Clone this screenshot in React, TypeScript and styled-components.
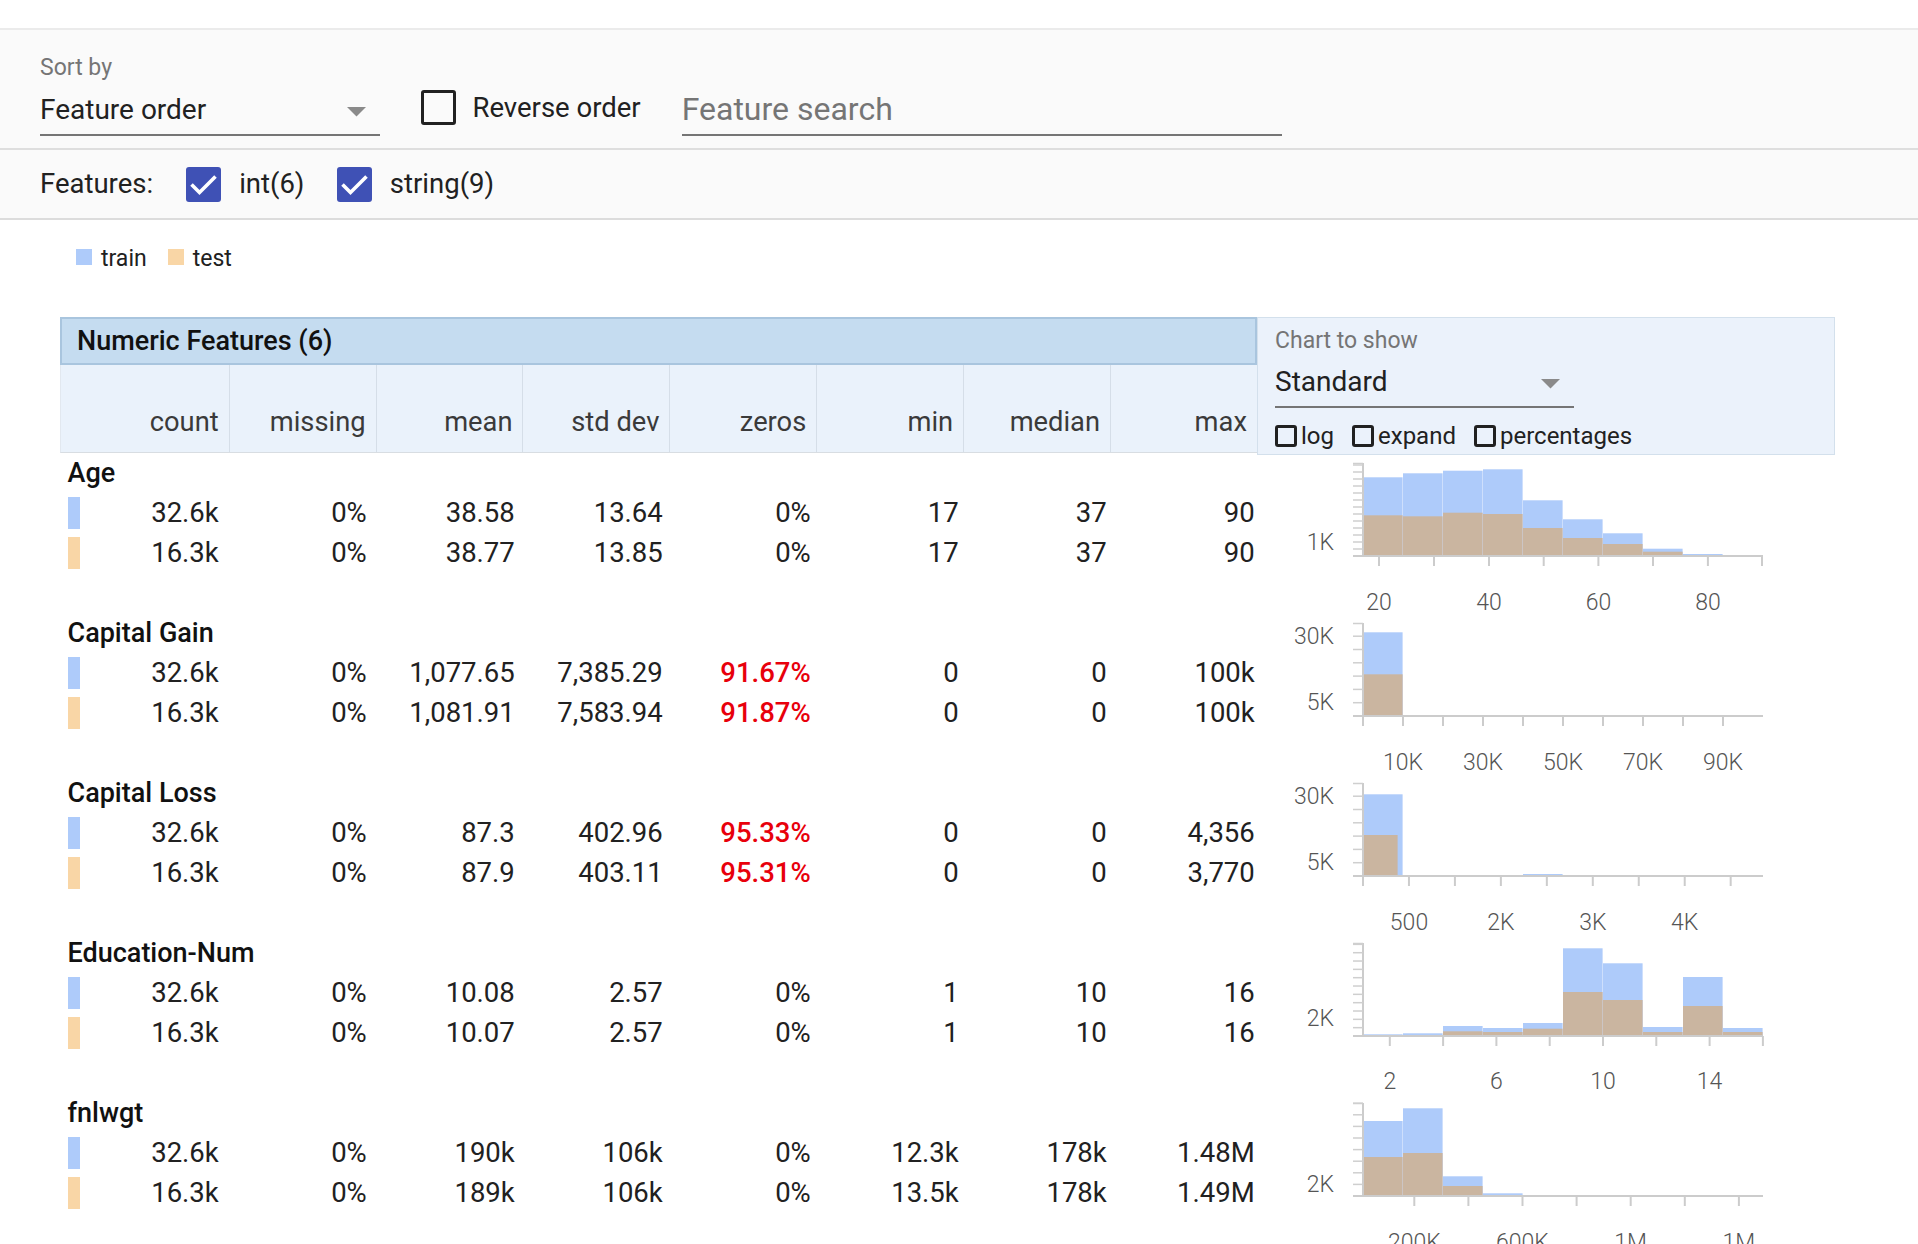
import React from "react";
import styled, { createGlobalStyle } from "styled-components";

const GlobalStyle = createGlobalStyle`
  html, body { margin: 0; padding: 0; background: #ffffff; }
  body {
    font-family: Roboto, "Liberation Sans", Arial, sans-serif;
    color: #212121;
  }
  * { box-sizing: border-box; }
`;

const BLUE = "#aecbfa";
const ORANGE = "#f9d6a6";
const TAN = "#cab5a0";

const Page = styled.div`
  width: 1918px;
`;

const TopStrip = styled.div`
  height: 30px;
  border-bottom: 2px solid #ebebeb;
  background: #ffffff;
`;

const Toolbar = styled.div`
  height: 120px;
  background: #fafafa;
  border-bottom: 2px solid #dedede;
  display: flex;
  align-items: flex-end;
  padding: 0 0 12px 40px;
`;

const SortField = styled.div`
  width: 340px;
  display: flex;
  flex-direction: column;
`;

const FloatLabel = styled.div`
  font-size: 23px;
  line-height: 28px;
  color: #757575;
  margin-bottom: 9.7px;
`;

const SelectBox = styled.div<{ $width?: number }>`
  display: flex;
  align-items: center;
  justify-content: space-between;
  width: ${(p) => (p.$width ? `${p.$width}px` : "100%")};
  border-bottom: 2px solid #757575;
  padding: 0 14px 7px 0;
`;

const SelectText = styled.span<{ $size: number; $shift?: number }>`
  font-size: ${(p) => p.$size}px;
  line-height: 34px;
  color: #212121;
  margin-top: ${(p) => p.$shift || 0}px;
`;

const Arrow = styled.svg`
  display: block;
  margin-top: 4px;
`;

const ReverseLabel = styled.label`
  display: flex;
  align-items: center;
  margin: 0 0 11px 40.5px;
`;

const OutlineBox = styled.span<{ $size: number; $border: number }>`
  display: inline-block;
  flex: none;
  width: ${(p) => p.$size}px;
  height: ${(p) => p.$size}px;
  border: ${(p) => p.$border}px solid #212121;
  border-radius: 3px;
`;

const ToolbarText = styled.span`
  font-size: 27.5px;
  line-height: 34px;
  margin-left: 17px;
  margin-top: 2px;
  color: #212121;
`;

const SearchInput = styled.input`
  margin-left: 41px;
  width: 600px;
  height: 38px;
  border: none;
  border-bottom: 2px solid #757575;
  background: transparent;
  padding: 0 0 6px 0;
  box-sizing: content-box;
  font-family: Roboto, "Liberation Sans", Arial, sans-serif;
  font-size: 32px;
  color: #212121;
  outline: none;
  &::placeholder {
    color: #757575;
  }
`;

const FeaturesBar = styled.div`
  height: 70px;
  background: #fafafa;
  border-bottom: 2px solid #dcdcdc;
  display: flex;
  align-items: center;
  padding-left: 40px;
`;

const FeaturesTitle = styled.span`
  font-size: 27.5px;
  line-height: 34px;
  margin-right: 33px;
`;

const TypeToggle = styled.label<{ $first?: boolean }>`
  display: flex;
  align-items: center;
  margin-left: ${(p) => (p.$first ? 0 : 32.4)}px;
`;

const FilledBox = styled.span`
  width: 35px;
  height: 35px;
  border-radius: 3px;
  background: #3f51b5;
  display: flex;
  align-items: center;
  justify-content: center;
`;

const ToggleText = styled.span`
  font-size: 27.5px;
  line-height: 34px;
  margin-left: 18px;
`;

const Content = styled.div`
  padding-left: 60px;
`;

const Legend = styled.div`
  height: 28px;
  margin-top: 23px;
  padding-left: 16px;
  display: flex;
  align-items: center;
`;

const Swatch = styled.span<{ $color: string; $gap?: number }>`
  width: 16px;
  height: 16px;
  background: ${(p) => p.$color};
  margin-left: ${(p) => p.$gap || 0}px;
`;

const LegendText = styled.span`
  font-size: 23px;
  line-height: 28px;
  margin-left: 9px;
  margin-top: 3px;
`;

const Tables = styled.div`
  display: flex;
  align-items: flex-start;
  margin-top: 45.7px;
`;

const NumericTable = styled.div`
  width: 1197px;
`;

const TitleBar = styled.div`
  height: 48.3px;
  background: #c5dcf0;
  border: 2px solid #a9c5de;
  display: flex;
  align-items: center;
  padding-left: 15px;
  font-size: 27px;
  font-weight: 500;
  line-height: 34px;
  color: #111;
`;

const COLS_HEAD = "167.7px repeat(7, 146.9px)";
const COLS_BODY = "168.75px repeat(7, 148px)";

const HeaderRow = styled.div`
  display: grid;
  grid-template-columns: ${COLS_HEAD};
  height: 88px;
  background: #eaf2fb;
  border-bottom: 1px solid #d8dde2;
  border-left: 1px solid #e2e8ef;
`;

const HeadCell = styled.div<{ $first?: boolean }>`
  display: flex;
  align-items: flex-end;
  justify-content: flex-end;
  padding: 0 10px 12.5px 0;
  border-left: ${(p) => (p.$first ? "none" : "1px solid #d5dee8")};
  font-size: 27.3px;
  line-height: 34px;
  color: #3a3a3a;
`;

const FeatureBlock = styled.div`
  height: 160px;
  padding-top: 2.5px;
`;

const FeatureName = styled.div`
  font-size: 27px;
  font-weight: 500;
  line-height: 36px;
  padding-left: 7.5px;
  margin-bottom: 6px;
  color: #111;
`;

const StatRow = styled.div`
  display: grid;
  grid-template-columns: ${COLS_BODY};
  height: 32px;
  margin-bottom: 8px;
`;

const FirstCell = styled.div`
  display: flex;
  align-items: center;
  justify-content: space-between;
  padding: 0 10px 0 8px;
`;

const SplitBar = styled.span<{ $color: string }>`
  width: 12px;
  height: 32px;
  background: ${(p) => p.$color};
`;

const CountText = styled.span`
  font-size: 27.5px;
  line-height: 32px;
  color: #212121;
  white-space: nowrap;
`;

const ValueCell = styled.div<{ $alert?: boolean }>`
  text-align: right;
  padding-right: 10px;
  font-size: 27.5px;
  line-height: 32px;
  font-weight: ${(p) => (p.$alert ? 500 : 400)};
  color: ${(p) => (p.$alert ? "#e8000b" : "#212121")};
  white-space: nowrap;
`;

const ChartColumn = styled.div`
  width: 578px;
`;

const ChartPanel = styled.div`
  height: 138.3px;
  background: #ebf2fb;
  border: 1px solid #d3e0ec;
  padding: 9px 0 0 17px;
`;

const PanelLabel = styled.div`
  font-size: 23px;
  line-height: 28px;
  color: #757575;
  margin-bottom: 10.6px;
`;

const OptionRow = styled.div`
  display: flex;
  align-items: center;
  height: 30px;
  margin-top: 13px;
`;

const Option = styled.label<{ $first?: boolean }>`
  display: flex;
  align-items: center;
  margin-left: ${(p) => (p.$first ? 0 : 18)}px;
`;

const OptionText = styled.span`
  font-size: 24px;
  line-height: 30px;
  margin-left: 4px;
  color: #212121;
`;

const ChartSvg = styled.svg`
  display: block;
`;

const DropArrow = () => (
  <Arrow width="19" height="10" viewBox="0 0 19 10">
    <polygon points="0,0 19,0 9.5,9.5" fill="#8a8a8a" />
  </Arrow>
);

const CheckMark = () => (
  <svg width="35" height="35" viewBox="0 0 35 35">
    <path d="M5.5 17.5L13.5 25.5L29.5 9.5" fill="none" stroke="#ffffff" strokeWidth="3.6" />
  </svg>
);

type Bar = { x: number; w: number; top: number };
type HistSpec = {
  blue: Bar[];
  tan: Bar[];
  yStep: number;
  yLabels: { t: string; y: number }[];
  xTicks: number[];
  xLabels: { t: string; x: number }[];
  labelY: number;
};

const bins = (tops: number[]): Bar[] =>
  tops.map((top, i) => ({ x: 106 + i * 40, w: 40, top }));

const range = (start: number, step: number, n: number) =>
  Array.from({ length: n }, (_, k) => start + step * k);

const AX = 106;
const BASE = 101;
const RIGHT = 506;

const Histogram: React.FC<{ spec: HistSpec }> = ({ spec }) => {
  const yTicks: number[] = [];
  for (let t = BASE; t >= 8; t -= spec.yStep) yTicks.push(t);
  return (
    <ChartSvg width="578" height="160" viewBox="0 0 578 160">
      {spec.blue.map((b, i) => (
        <rect key={"b" + i} x={b.x} y={b.top} width={b.w - 0.4} height={BASE - b.top} fill={BLUE} />
      ))}
      {spec.tan.map((b, i) => (
        <rect key={"t" + i} x={b.x} y={b.top} width={b.w - 0.4} height={BASE - b.top} fill={TAN} />
      ))}
      <line x1={AX} y1={8} x2={AX} y2={BASE} stroke="#cccccc" strokeWidth="2" />
      {yTicks.map((t, i) => (
        <line key={"y" + i} x1={96} y1={t} x2={AX} y2={t} stroke="#cfcfcf" strokeWidth="1.5" />
      ))}
      <line x1={96} y1={8.5} x2={AX} y2={8.5} stroke="#cfcfcf" strokeWidth="1.5" />
      <line x1={96} y1={BASE} x2={RIGHT} y2={BASE} stroke="#cccccc" strokeWidth="2" />
      {spec.xTicks.map((x, i) => (
        <line key={"x" + i} x1={x} y1={BASE} x2={x} y2={111} stroke="#cccccc" strokeWidth="2" />
      ))}
      {spec.yLabels.map((l, i) => (
        <text
          key={"yl" + i}
          x={77}
          y={l.y}
          textAnchor="end"
          fontFamily="Roboto, 'Liberation Sans', sans-serif"
          fontWeight={300}
          fontSize="23"
          fill="#555555"
        >
          {l.t}
        </text>
      ))}
      {spec.xLabels.map((l, i) => (
        <text
          key={"xl" + i}
          x={l.x}
          y={spec.labelY}
          textAnchor="middle"
          fontFamily="Roboto, 'Liberation Sans', sans-serif"
          fontWeight={300}
          fontSize="23"
          fill="#555555"
        >
          {l.t}
        </text>
      ))}
    </ChartSvg>
  );
};

type Cell = { v: string; alert?: boolean };
type Feature = { name: string; rows: Cell[][]; hist: HistSpec };

const c = (v: string, alert?: boolean): Cell => ({ v, alert });

const features: Feature[] = [
  {
    name: "Age",
    rows: [
      [c("32.6k"), c("0%"), c("38.58"), c("13.64"), c("0%"), c("17"), c("37"), c("90")],
      [c("16.3k"), c("0%"), c("38.77"), c("13.85"), c("0%"), c("17"), c("37"), c("90")],
    ],
    hist: {
      blue: bins([22.3, 18.3, 15.7, 14.3, 45.3, 64.3, 78.3, 93.7, 99, 100.3]),
      tan: bins([60.3, 61.3, 57.7, 59, 73, 83, 89, 96.7, 100, 101]),
      yStep: 7,
      yLabels: [{ t: "1K", y: 94.5 }],
      xTicks: [122, 177, 232, 286.7, 341.4, 396, 450.9, 505],
      xLabels: [
        { t: "20", x: 122 },
        { t: "40", x: 232 },
        { t: "60", x: 341.4 },
        { t: "80", x: 450.9 },
      ],
      labelY: 155,
    },
  },
  {
    name: "Capital Gain",
    rows: [
      [c("32.6k"), c("0%"), c("1,077.65"), c("7,385.29"), c("91.67%", true), c("0"), c("0"), c("100k")],
      [c("16.3k"), c("0%"), c("1,081.91"), c("7,583.94"), c("91.87%", true), c("0"), c("0"), c("100k")],
    ],
    hist: {
      blue: bins([17.3]),
      tan: bins([59.3]),
      yStep: 13.3,
      yLabels: [
        { t: "30K", y: 29 },
        { t: "5K", y: 95 },
      ],
      xTicks: range(106, 40, 10),
      xLabels: [
        { t: "10K", x: 146 },
        { t: "30K", x: 226 },
        { t: "50K", x: 306 },
        { t: "70K", x: 386 },
        { t: "90K", x: 466 },
      ],
      labelY: 155,
    },
  },
  {
    name: "Capital Loss",
    rows: [
      [c("32.6k"), c("0%"), c("87.3"), c("402.96"), c("95.33%", true), c("0"), c("0"), c("4,356")],
      [c("16.3k"), c("0%"), c("87.9"), c("403.11"), c("95.31%", true), c("0"), c("0"), c("3,770")],
    ],
    hist: {
      blue: [
        { x: 106, w: 40, top: 19.3 },
        { x: 266, w: 40, top: 99 },
      ],
      tan: [{ x: 106, w: 35, top: 60 }],
      yStep: 13.3,
      yLabels: [
        { t: "30K", y: 29 },
        { t: "5K", y: 95 },
      ],
      xTicks: range(106, 45.96, 9),
      xLabels: [
        { t: "500", x: 152 },
        { t: "2K", x: 243.9 },
        { t: "3K", x: 335.8 },
        { t: "4K", x: 427.7 },
      ],
      labelY: 155,
    },
  },
  {
    name: "Education-Num",
    rows: [
      [c("32.6k"), c("0%"), c("10.08"), c("2.57"), c("0%"), c("1"), c("10"), c("16")],
      [c("16.3k"), c("0%"), c("10.07"), c("2.57"), c("0%"), c("1"), c("10"), c("16")],
    ],
    hist: {
      blue: bins([99.3, 98.3, 91, 93, 88, 13.3, 28.3, 92, 42, 93]),
      tan: bins([101, 100.5, 96.3, 97, 93.7, 57, 65, 97, 71, 97]),
      yStep: 8.33,
      yLabels: [{ t: "2K", y: 91 }],
      xTicks: range(132.8, 53.3, 8),
      xLabels: [
        { t: "2", x: 132.8 },
        { t: "6", x: 239.4 },
        { t: "10", x: 346 },
        { t: "14", x: 452.6 },
      ],
      labelY: 154,
    },
  },
  {
    name: "fnlwgt",
    rows: [
      [c("32.6k"), c("0%"), c("190k"), c("106k"), c("0%"), c("12.3k"), c("178k"), c("1.48M")],
      [c("16.3k"), c("0%"), c("189k"), c("106k"), c("0%"), c("13.5k"), c("178k"), c("1.49M")],
    ],
    hist: {
      blue: bins([26, 13.3, 81.3, 98.3]),
      tan: bins([62, 58, 91]),
      yStep: 11.6,
      yLabels: [{ t: "2K", y: 96.7 }],
      xTicks: range(157.3, 54.1, 7),
      xLabels: [
        { t: "200K", x: 157.3 },
        { t: "600K", x: 265.5 },
        { t: "1M", x: 373.7 },
        { t: "1M", x: 481.9 },
      ],
      labelY: 155,
    },
  },
];

const headers = ["count", "missing", "mean", "std dev", "zeros", "min", "median", "max"];

export default function App() {
  return (
    <Page>
      <GlobalStyle />
      <TopStrip />
      <Toolbar>
        <SortField>
          <FloatLabel>Sort by</FloatLabel>
          <SelectBox>
            <SelectText $size={28} $shift={1}>Feature order</SelectText>
            <DropArrow />
          </SelectBox>
        </SortField>
        <ReverseLabel>
          <OutlineBox $size={35} $border={3.5} />
          <ToolbarText>Reverse order</ToolbarText>
        </ReverseLabel>
        <SearchInput placeholder="Feature search" />
      </Toolbar>
      <FeaturesBar>
        <FeaturesTitle>Features:</FeaturesTitle>
        <TypeToggle $first>
          <FilledBox>
            <CheckMark />
          </FilledBox>
          <ToggleText>int(6)</ToggleText>
        </TypeToggle>
        <TypeToggle>
          <FilledBox>
            <CheckMark />
          </FilledBox>
          <ToggleText>string(9)</ToggleText>
        </TypeToggle>
      </FeaturesBar>
      <Content>
        <Legend>
          <Swatch $color={BLUE} />
          <LegendText>train</LegendText>
          <Swatch $color={ORANGE} $gap={21} />
          <LegendText>test</LegendText>
        </Legend>
        <Tables>
          <NumericTable>
            <TitleBar>Numeric Features (6)</TitleBar>
            <HeaderRow>
              {headers.map((h, i) => (
                <HeadCell key={h} $first={i === 0}>
                  {h}
                </HeadCell>
              ))}
            </HeaderRow>
            {features.map((f) => (
              <FeatureBlock key={f.name}>
                <FeatureName>{f.name}</FeatureName>
                {f.rows.map((row, ri) => (
                  <StatRow key={ri}>
                    <FirstCell>
                      <SplitBar $color={ri === 0 ? BLUE : ORANGE} />
                      <CountText>{row[0].v}</CountText>
                    </FirstCell>
                    {row.slice(1).map((cell, ci) => (
                      <ValueCell key={ci} $alert={cell.alert}>
                        {cell.v}
                      </ValueCell>
                    ))}
                  </StatRow>
                ))}
              </FeatureBlock>
            ))}
          </NumericTable>
          <ChartColumn>
            <ChartPanel>
              <PanelLabel>Chart to show</PanelLabel>
              <SelectBox $width={299}>
                <SelectText $size={28}>Standard</SelectText>
                <DropArrow />
              </SelectBox>
              <OptionRow>
                <Option $first>
                  <OutlineBox $size={22} $border={3} />
                  <OptionText>log</OptionText>
                </Option>
                <Option>
                  <OutlineBox $size={22} $border={3} />
                  <OptionText>expand</OptionText>
                </Option>
                <Option>
                  <OutlineBox $size={22} $border={3} />
                  <OptionText>percentages</OptionText>
                </Option>
              </OptionRow>
            </ChartPanel>
            {features.map((f) => (
              <Histogram key={f.name} spec={f.hist} />
            ))}
          </ChartColumn>
        </Tables>
      </Content>
    </Page>
  );
}
